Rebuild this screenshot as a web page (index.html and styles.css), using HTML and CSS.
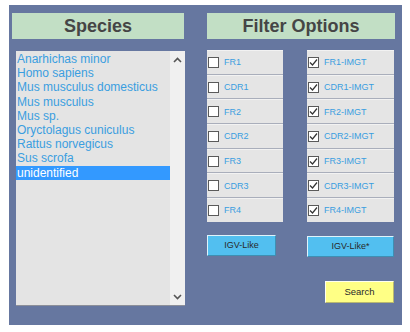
FILE: index.html
```html
<!DOCTYPE html>
<html lang="en">
<head>
  <meta charset="UTF-8">
  <title>Species Filter</title>
  <link rel="stylesheet" href="styles.css">
</head>
<body>
  <div class="panel">
    <div class="species-col">
      <h2 class="title">Species</h2>
      <div class="listbox">
        <ul class="items">
          <li>Anarhichas minor</li>
          <li>Homo sapiens</li>
          <li>Mus musculus domesticus</li>
          <li>Mus musculus</li>
          <li>Mus sp.</li>
          <li>Oryctolagus cuniculus</li>
          <li>Rattus norvegicus</li>
          <li>Sus scrofa</li>
          <li class="selected">unidentified</li>
        </ul>
        <div class="scrollbar">
          <svg width="9" height="6" viewBox="0 0 9 6"><path d="M1 5 L4.5 1.5 L8 5" fill="none" stroke="#555" stroke-width="1.6"/></svg>
          <svg width="9" height="6" viewBox="0 0 9 6"><path d="M1 1 L4.5 4.5 L8 1" fill="none" stroke="#555" stroke-width="1.6"/></svg>
        </div>
      </div>
    </div>

    <div class="filter-col">
      <h2 class="title">Filter Options</h2>
      <div class="options">
        <div class="opt-list">
          <label class="opt"><span class="box"></span>FR1</label>
          <label class="opt"><span class="box"></span>CDR1</label>
          <label class="opt"><span class="box"></span>FR2</label>
          <label class="opt"><span class="box"></span>CDR2</label>
          <label class="opt"><span class="box"></span>FR3</label>
          <label class="opt"><span class="box"></span>CDR3</label>
          <label class="opt"><span class="box"></span>FR4</label>
        </div>
        <div class="opt-list">
          <label class="opt"><span class="box checked"><svg width="9" height="9" viewBox="0 0 9 9"><path d="M1 4.5 L3.5 7 L8 1.5" fill="none" stroke="#333" stroke-width="1.2"/></svg></span>FR1-IMGT</label>
          <label class="opt"><span class="box checked"><svg width="9" height="9" viewBox="0 0 9 9"><path d="M1 4.5 L3.5 7 L8 1.5" fill="none" stroke="#333" stroke-width="1.2"/></svg></span>CDR1-IMGT</label>
          <label class="opt"><span class="box checked"><svg width="9" height="9" viewBox="0 0 9 9"><path d="M1 4.5 L3.5 7 L8 1.5" fill="none" stroke="#333" stroke-width="1.2"/></svg></span>FR2-IMGT</label>
          <label class="opt"><span class="box checked"><svg width="9" height="9" viewBox="0 0 9 9"><path d="M1 4.5 L3.5 7 L8 1.5" fill="none" stroke="#333" stroke-width="1.2"/></svg></span>CDR2-IMGT</label>
          <label class="opt"><span class="box checked"><svg width="9" height="9" viewBox="0 0 9 9"><path d="M1 4.5 L3.5 7 L8 1.5" fill="none" stroke="#333" stroke-width="1.2"/></svg></span>FR3-IMGT</label>
          <label class="opt"><span class="box checked"><svg width="9" height="9" viewBox="0 0 9 9"><path d="M1 4.5 L3.5 7 L8 1.5" fill="none" stroke="#333" stroke-width="1.2"/></svg></span>CDR3-IMGT</label>
          <label class="opt"><span class="box checked"><svg width="9" height="9" viewBox="0 0 9 9"><path d="M1 4.5 L3.5 7 L8 1.5" fill="none" stroke="#333" stroke-width="1.2"/></svg></span>FR4-IMGT</label>
        </div>
        <button class="btn igv">IGV-Like</button>
        <button class="btn igv wide">IGV-Like*</button>
      </div>
      <button class="btn search">Search</button>
    </div>
  </div>
</body>
</html>
```

FILE: styles.css
```css
* {
  box-sizing: border-box;
}

body {
  margin: 0;
  background: #fff;
  font-family: 'Liberation Sans', Arial, sans-serif;
}

.panel {
  margin: 5px 0 0 9px;
  width: 393px;
  height: 320px;
  background: #6677a0;
  padding: 8px 0 0 3px;
  display: flex;
}

.title {
  margin: 0;
  height: 26px;
  background: #c2dfc5;
  color: #454545;
  font-size: 18px;
  font-weight: bold;
  text-align: center;
  line-height: 26px;
}

.species-col {
  width: 172px;
}

.listbox {
  margin: 12px 0 0 4px;
  width: 169px;
  height: 255px;
  background: #e4e4e4;
  display: flex;
  border-bottom: 1px solid #8c8f99;
}

.items {
  list-style: none;
  margin: 0;
  padding: 1px 0 0;
  flex: 1;
}

.items li {
  font-size: 12px;
  line-height: 14.2px;
  color: #3a9ee0;
  padding-left: 1px;
}

.items li.selected {
  background: #3399ff;
  color: #fff;
}

.scrollbar {
  width: 15px;
  background: #f0f0f0;
  display: flex;
  flex-direction: column;
  justify-content: space-between;
  align-items: center;
  padding: 6px 0 5px;
}

.filter-col {
  margin-left: 23px;
  width: 188px;
}

.options {
  display: grid;
  grid-template-columns: 76px 87px;
  column-gap: 24px;
  margin-top: 11px;
}

.opt-list {
  display: flex;
  flex-direction: column;
  gap: 1px;
  background: #a9aebb;
}

.opt {
  height: 23.7px;
  background: #e5e5e5;
  display: flex;
  align-items: center;
  font-size: 9px;
  color: #3a9ee0;
  border-top: 1px solid #f2f2f2;
}

.box {
  width: 11px;
  height: 11px;
  margin: 0 5px 0 1px;
  background: #fff;
  border: 1px solid #5a5a5a;
  display: flex;
  align-items: center;
  justify-content: center;
}

.btn {
  font-family: 'Liberation Sans', Arial, sans-serif;
  font-size: 9px;
  color: #2a2a2a;
  padding: 0;
  border: 1px solid;
  border-color: #dff3fb #3e8fb3 #3e8fb3 #dff3fb;
}

.igv {
  margin-top: 13px;
  width: 69px;
  height: 21px;
  background: #52bff0;
}

.igv.wide {
  width: 87px;
  margin-top: 14px;
}

.search {
  display: block;
  margin: 24px 0 0 118px;
  width: 69px;
  height: 22px;
  font-size: 9.5px;
  background: #ffff85;
  border-color: #fffff0 #b8b870 #b8b870 #fffff0;
}
```
